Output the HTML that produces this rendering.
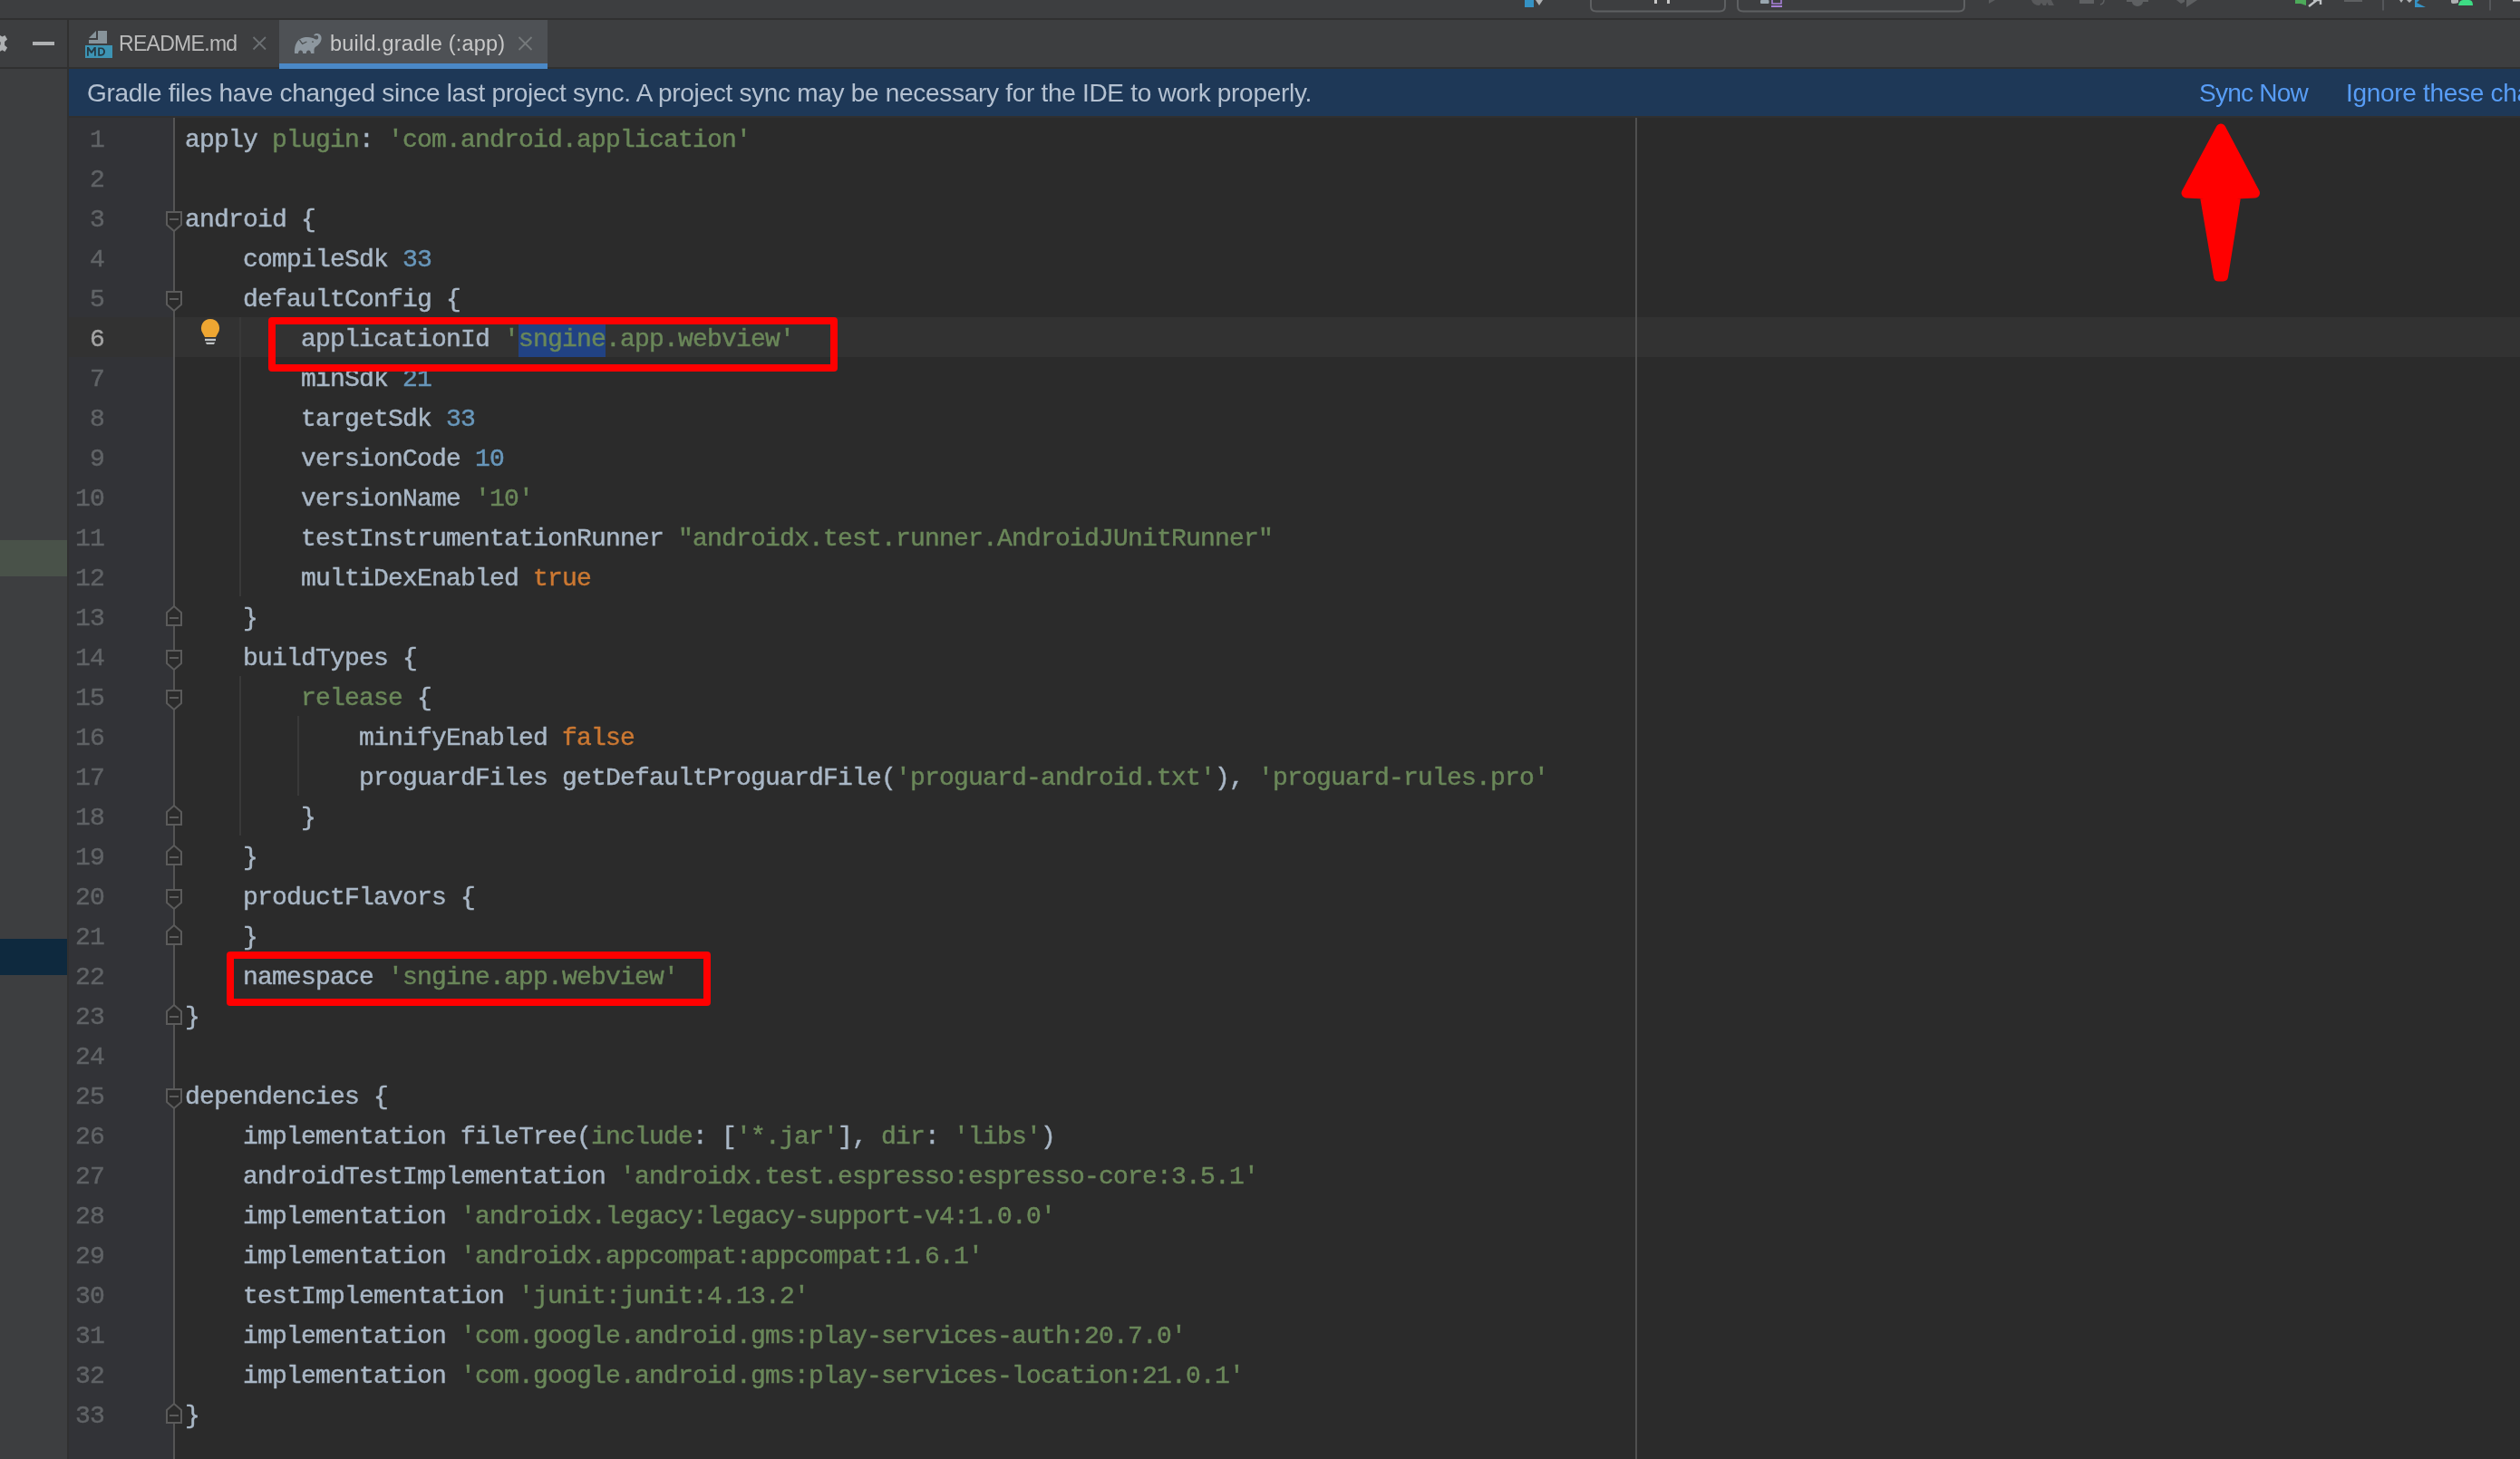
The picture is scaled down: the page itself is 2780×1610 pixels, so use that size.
<!DOCTYPE html>
<html><head><meta charset="utf-8">
<style>
*{margin:0;padding:0;box-sizing:border-box}
html,body{width:2780px;height:1610px;overflow:hidden;background:#3d3e40;position:relative}
.a{position:absolute}
.ui{font-family:"Liberation Sans",sans-serif;white-space:pre;will-change:transform}
.mono{font-family:"Liberation Mono",monospace;font-size:28px;letter-spacing:-0.803px;white-space:pre;will-change:transform;-webkit-text-stroke:0.45px currentColor}
#code,#nums{position:absolute;left:0;top:0;width:2780px;height:1610px}
#code .l{position:absolute;left:204px;height:44px;line-height:50px;color:#a9b7c6}
#nums .n{position:absolute;left:76px;width:39px;text-align:right;height:44px;line-height:50px;color:#606366}
.s{color:#6a8759}.k{color:#cc7832}.d{color:#6897bb}
.guide{position:absolute;width:2px;background:#393939}
</style></head><body>
<!-- top toolbar -->
<div class="a" style="left:0;top:0;width:2780px;height:20px;background:#3d3e40"></div>
<div class="a" style="left:0;top:20px;width:2780px;height:2px;background:#303030"></div>
<!-- tab bar -->
<div class="a" style="left:0;top:22px;width:2780px;height:52px;background:#3d3e40"></div>
<div class="a" style="left:0;top:74px;width:2780px;height:2px;background:#303030"></div>
<!-- left panel -->
<div class="a" style="left:0;top:76px;width:74px;height:1534px;background:#3d3e40"></div>
<div class="a" style="left:74px;top:22px;width:2px;height:1588px;background:#303030"></div>
<div class="a" style="left:0;top:596px;width:74px;height:40px;background:#495249"></div>
<div class="a" style="left:0;top:1036px;width:74px;height:40px;background:#0e293e"></div>
<!-- active tab -->
<div class="a" style="left:308px;top:22px;width:296px;height:54px;background:#4e5155"></div>
<div class="a" style="left:308px;top:70px;width:296px;height:6px;background:#4a88c7"></div>
<!-- banner -->
<div class="a" style="left:76px;top:76px;width:2704px;height:52px;background:#1e3857"></div>
<div class="a" style="left:76px;top:128px;width:2704px;height:2px;background:#303030"></div>

<!-- tab texts -->
<div class="a ui" style="left:131px;top:35px;font-size:23px;letter-spacing:-0.7px;color:#bbbbbb">README.md</div>
<div class="a ui" style="left:364px;top:35px;font-size:23.5px;letter-spacing:0.2px;color:#c8c8c8">build.gradle (:app)</div>
<!-- banner texts -->
<div class="a ui" style="left:96px;top:87px;font-size:28px;letter-spacing:-0.3px;color:#b4c1d1">Gradle files have changed since last project sync. A project sync may be necessary for the IDE to work properly.</div>
<div class="a ui" style="left:2426px;top:87px;font-size:28px;letter-spacing:-0.75px;color:#589df6">Sync Now</div>
<div class="a ui" style="left:2588px;top:87px;font-size:28px;letter-spacing:-0.3px;color:#589df6">Ignore these changes</div>
<!-- gutter / editor -->
<div class="a" style="left:76px;top:130px;width:115px;height:1480px;background:#323337"></div>
<div class="a" style="left:193px;top:130px;width:2587px;height:1480px;background:#2b2b2b"></div>
<div class="a" style="left:76px;top:350px;width:115px;height:44px;background:#323232"></div>
<div class="a" style="left:193px;top:350px;width:2587px;height:44px;background:#323232"></div>
<div class="a" style="left:191px;top:130px;width:2px;height:1480px;background:#555555"></div>
<div class="a" style="left:1804px;top:130px;width:2px;height:1480px;background:#4f4f4f"></div>

<svg class="a" style="left:0;top:0" width="2780" height="1610" viewBox="0 0 2780 1610">
<!-- toolbar icons (cut off at top) -->
<rect x="1682" y="0" width="10" height="8" fill="#3592c4"/>
<path d="M1694,0 H1702 L1698,6 Z" fill="#afb1b3"/>
<path d="M1755,0 V7 Q1755,12.5 1761,12.5 H1897 Q1903,12.5 1903,7 V0" fill="none" stroke="#5e6062" stroke-width="2"/>
<rect x="1825" y="0" width="3" height="4" fill="#c8c8c8"/><rect x="1839" y="0" width="3" height="4" fill="#c8c8c8"/>
<path d="M1917,0 V7 Q1917,12.5 1923,12.5 H2161 Q2167,12.5 2167,7 V0" fill="none" stroke="#5e6062" stroke-width="2"/>
<rect x="1942" y="0" width="9.5" height="4" rx="1" fill="#9aa7b0"/>
<path d="M1955,0 V4 H1965 V0" fill="none" stroke="#a67fd6" stroke-width="1.6"/><rect x="1954" y="6" width="12" height="2" fill="#a67fd6"/>
<path d="M2194,0 H2201 L2194,4 Z" fill="#5a5c5e"/>
<path d="M2241,0 Q2243,6 2250,6 L2252,3 L2254,6 H2257 L2259,0 Z M2257,0 L2260,6 H2266 L2263,0 Z" fill="#58595b"/>
<rect x="2294" y="0" width="16" height="4" fill="#5e6062"/><path d="M2317,5 Q2321,4 2321,0" stroke="#5e6062" stroke-width="1.5" fill="none"/>
<path d="M2346,0 H2370 V2 H2364 A6,5 0 0 1 2352,2 H2346 Z" fill="#5e6062"/>
<path d="M2401,0 H2410 V2 L2406,4 Z" fill="#5e6062"/><path d="M2412,0 H2424 L2412,8 Z" fill="#5e6062"/>
<path d="M2532,0 H2544 V6 L2538,4 H2532 Z" fill="#4dab5a"/>
<path d="M2547,7 L2556,0 M2552,0 H2560 V5" stroke="#c0c3c5" stroke-width="2.4" fill="none"/>
<rect x="2586" y="0" width="20" height="2" fill="#5e6062"/>
<rect x="2628" y="0" width="2" height="11.5" fill="#55575a"/>
<path d="M2647,0 H2651 L2649,3 Z M2655,0 H2661 L2658,3 Z" fill="#afb1b3"/>
<path d="M2664,0 H2669 L2666,3 L2676,8 H2664 Z" fill="#3592c4"/>
<path d="M2704,0 H2712 V3 Q2710,4 2706,4 Q2704,4 2704,2 Z" fill="#afb1b3"/>
<path d="M2712,6 Q2713,0 2717,0 H2724 Q2728,0 2728,6 Z" fill="#3ddc84"/>
<rect x="2746" y="0" width="2" height="11.5" fill="#55575a"/>
<rect x="2772" y="0" width="8" height="1.5" fill="#c8c8c8"/>
<!-- left gear partial -->
<path d="M0,39 L2.5,40.6 L5.4,39 L8.1,43.6 L5.1,45.9 L5.1,50.1 L8.1,52.4 L5.4,56.9 L2.5,55.2 L0,56.7 Z" fill="#afb1b3"/><rect x="0" y="46.2" width="0.8" height="3.3" fill="#5a5c5e"/>
<rect x="36" y="46" width="24" height="4" fill="#afb1b3"/>
<!-- MD icon -->
<path d="M98,42 L106,34 L106,42 Z" fill="#87939a"/>
<path d="M108,34 H118 V48 H98 V44 H108 Z" fill="#87939a"/>
<rect x="94" y="50" width="30" height="14" fill="#3d94b4"/>
<path d="M96,61.8 V52.1 H97.9 L100.9,56.6 L103.9,52.1 H105.8 V61.8 H104 V55.3 L101.6,58.8 H100.2 L97.8,55.3 V61.8 Z" fill="#263a44"/>
<path d="M108.2,52.4 H111.5 C114.5,52.4 116,54.5 116,57.1 C116,59.7 114.5,61.8 111.5,61.8 H108.2 Z M110,54.1 V60.1 H111.4 C113.1,60.1 114.1,59 114.1,57.1 C114.1,55.2 113.1,54.1 111.4,54.1 Z" fill="#263a44"/>
<!-- close x readme -->
<path d="M279.5,41 L293,54.5 M293,41 L279.5,54.5" stroke="#6c7073" stroke-width="1.8"/>
<!-- close x active -->
<path d="M572.5,41 L586.5,55 M586.5,41 L572.5,55" stroke="#767a7c" stroke-width="1.8"/>
<!-- elephant -->
<g transform="translate(318,30)" fill="#8d979f">
<path d="M7,28.9 C6.6,22 8.5,16 12.6,13.2 C15,11.6 18,11 21.5,11 C25,11 27.5,12 29.5,13.2 L31,13.5 C32.3,13.5 33.2,12.6 33.2,11.2 C33.2,9.9 32.3,9.1 31,9.1 C30.2,9.1 29.6,9.4 29,9.8 L28.2,8.6 C29,7.6 30.2,7 31.6,7 C34.6,7 36.6,9.2 36.6,12.2 C36.6,16.2 33.5,19.6 30.4,21.6 C29,22.6 28.5,24 28.5,25.5 V28.9 H25 C24.8,26.5 23.8,25.5 22.4,25.5 C21,25.5 20,26.5 19.8,28.9 H16.2 C16,26.5 15,25.5 13.6,25.5 C12.2,25.5 11.2,26.5 11,28.9 Z"/>
<path d="M12.4,14 L15.6,18.4 L20.4,16" stroke="#4e5254" stroke-width="1.3" fill="none"/>
<circle cx="27" cy="16.1" r="0.9" fill="#4e5254"/>
</g>
<!-- lightbulb -->
<path d="M226,372 L223.2,367 A10.1,10.1 0 1 1 240.8,367 L238,372 Z" fill="#eea632"/>
<rect x="226" y="373.8" width="12" height="2.3" fill="#c0c3c5"/>
<path d="M226.8,377.8 H237.2 L236,380 H228 Z" fill="#c0c3c5"/>
<path d="M184,234 H200 V248 L192,255 L184,248 Z" fill="#2b2b2b" stroke="#5b5b5b" stroke-width="2"/><rect x="187" y="241" width="10" height="2" fill="#5b5b5b"/>
<path d="M184,322 H200 V336 L192,343 L184,336 Z" fill="#2b2b2b" stroke="#5b5b5b" stroke-width="2"/><rect x="187" y="329" width="10" height="2" fill="#5b5b5b"/>
<path d="M184,718 H200 V732 L192,739 L184,732 Z" fill="#2b2b2b" stroke="#5b5b5b" stroke-width="2"/><rect x="187" y="725" width="10" height="2" fill="#5b5b5b"/>
<path d="M184,762 H200 V776 L192,783 L184,776 Z" fill="#2b2b2b" stroke="#5b5b5b" stroke-width="2"/><rect x="187" y="769" width="10" height="2" fill="#5b5b5b"/>
<path d="M184,982 H200 V996 L192,1003 L184,996 Z" fill="#2b2b2b" stroke="#5b5b5b" stroke-width="2"/><rect x="187" y="989" width="10" height="2" fill="#5b5b5b"/>
<path d="M184,1202 H200 V1216 L192,1223 L184,1216 Z" fill="#2b2b2b" stroke="#5b5b5b" stroke-width="2"/><rect x="187" y="1209" width="10" height="2" fill="#5b5b5b"/>
<path d="M184,690 H200 V676 L192,669 L184,676 Z" fill="#2b2b2b" stroke="#5b5b5b" stroke-width="2"/><rect x="187" y="681" width="10" height="2" fill="#5b5b5b"/>
<path d="M184,910 H200 V896 L192,889 L184,896 Z" fill="#2b2b2b" stroke="#5b5b5b" stroke-width="2"/><rect x="187" y="901" width="10" height="2" fill="#5b5b5b"/>
<path d="M184,954 H200 V940 L192,933 L184,940 Z" fill="#2b2b2b" stroke="#5b5b5b" stroke-width="2"/><rect x="187" y="945" width="10" height="2" fill="#5b5b5b"/>
<path d="M184,1042 H200 V1028 L192,1021 L184,1028 Z" fill="#2b2b2b" stroke="#5b5b5b" stroke-width="2"/><rect x="187" y="1033" width="10" height="2" fill="#5b5b5b"/>
<path d="M184,1130 H200 V1116 L192,1109 L184,1116 Z" fill="#2b2b2b" stroke="#5b5b5b" stroke-width="2"/><rect x="187" y="1121" width="10" height="2" fill="#5b5b5b"/>
<path d="M184,1570 H200 V1556 L192,1549 L184,1556 Z" fill="#2b2b2b" stroke="#5b5b5b" stroke-width="2"/><rect x="187" y="1561" width="10" height="2" fill="#5b5b5b"/>
</svg>
<div id="nums" class="mono">
<div class="n" style="top:130px">1</div>
<div class="n" style="top:174px">2</div>
<div class="n" style="top:218px">3</div>
<div class="n" style="top:262px">4</div>
<div class="n" style="top:306px">5</div>
<div class="n" style="top:350px;color:#a4a4a4">6</div>
<div class="n" style="top:394px">7</div>
<div class="n" style="top:438px">8</div>
<div class="n" style="top:482px">9</div>
<div class="n" style="top:526px">10</div>
<div class="n" style="top:570px">11</div>
<div class="n" style="top:614px">12</div>
<div class="n" style="top:658px">13</div>
<div class="n" style="top:702px">14</div>
<div class="n" style="top:746px">15</div>
<div class="n" style="top:790px">16</div>
<div class="n" style="top:834px">17</div>
<div class="n" style="top:878px">18</div>
<div class="n" style="top:922px">19</div>
<div class="n" style="top:966px">20</div>
<div class="n" style="top:1010px">21</div>
<div class="n" style="top:1054px">22</div>
<div class="n" style="top:1098px">23</div>
<div class="n" style="top:1142px">24</div>
<div class="n" style="top:1186px">25</div>
<div class="n" style="top:1230px">26</div>
<div class="n" style="top:1274px">27</div>
<div class="n" style="top:1318px">28</div>
<div class="n" style="top:1362px">29</div>
<div class="n" style="top:1406px">30</div>
<div class="n" style="top:1450px">31</div>
<div class="n" style="top:1494px">32</div>
<div class="n" style="top:1538px">33</div>
</div>
<div class="guide" style="left:264px;top:350px;height:308px"></div>
<div class="guide" style="left:264px;top:746px;height:176px"></div>
<div class="guide" style="left:328px;top:790px;height:88px"></div>
<div class="a" style="left:572px;top:350px;width:96px;height:44px;background:#214283"></div>
<div id="code" class="mono">
<div class="l" style="top:130px">apply <span class="s">plugin</span>: <span class="s">&#x27;com.android.application&#x27;</span></div>
<div class="l" style="top:174px"></div>
<div class="l" style="top:218px">android {</div>
<div class="l" style="top:262px">    compileSdk <span class="d">33</span></div>
<div class="l" style="top:306px">    defaultConfig {</div>
<div class="l" style="top:350px">        applicationId <span class="s">&#x27;sngine.app.webview&#x27;</span></div>
<div class="l" style="top:394px">        minSdk <span class="d">21</span></div>
<div class="l" style="top:438px">        targetSdk <span class="d">33</span></div>
<div class="l" style="top:482px">        versionCode <span class="d">10</span></div>
<div class="l" style="top:526px">        versionName <span class="s">&#x27;10&#x27;</span></div>
<div class="l" style="top:570px">        testInstrumentationRunner <span class="s">&quot;androidx.test.runner.AndroidJUnitRunner&quot;</span></div>
<div class="l" style="top:614px">        multiDexEnabled <span class="k">true</span></div>
<div class="l" style="top:658px">    }</div>
<div class="l" style="top:702px">    buildTypes {</div>
<div class="l" style="top:746px">        <span class="s">release</span> {</div>
<div class="l" style="top:790px">            minifyEnabled <span class="k">false</span></div>
<div class="l" style="top:834px">            proguardFiles getDefaultProguardFile(<span class="s">&#x27;proguard-android.txt&#x27;</span>), <span class="s">&#x27;proguard-rules.pro&#x27;</span></div>
<div class="l" style="top:878px">        }</div>
<div class="l" style="top:922px">    }</div>
<div class="l" style="top:966px">    productFlavors {</div>
<div class="l" style="top:1010px">    }</div>
<div class="l" style="top:1054px">    namespace <span class="s">&#x27;sngine.app.webview&#x27;</span></div>
<div class="l" style="top:1098px">}</div>
<div class="l" style="top:1142px"></div>
<div class="l" style="top:1186px">dependencies {</div>
<div class="l" style="top:1230px">    implementation fileTree(<span class="s">include</span>: [<span class="s">&#x27;*.jar&#x27;</span>], <span class="s">dir</span>: <span class="s">&#x27;libs&#x27;</span>)</div>
<div class="l" style="top:1274px">    androidTestImplementation <span class="s">&#x27;androidx.test.espresso:espresso-core:3.5.1&#x27;</span></div>
<div class="l" style="top:1318px">    implementation <span class="s">&#x27;androidx.legacy:legacy-support-v4:1.0.0&#x27;</span></div>
<div class="l" style="top:1362px">    implementation <span class="s">&#x27;androidx.appcompat:appcompat:1.6.1&#x27;</span></div>
<div class="l" style="top:1406px">    testImplementation <span class="s">&#x27;junit:junit:4.13.2&#x27;</span></div>
<div class="l" style="top:1450px">    implementation <span class="s">&#x27;com.google.android.gms:play-services-auth:20.7.0&#x27;</span></div>
<div class="l" style="top:1494px">    implementation <span class="s">&#x27;com.google.android.gms:play-services-location:21.0.1&#x27;</span></div>
<div class="l" style="top:1538px">}</div>
</div>

<!-- annotations -->
<div class="a" style="left:296px;top:350px;width:628px;height:60px;border:8px solid #ff0000;border-radius:4px"></div>
<div class="a" style="left:250px;top:1050px;width:534px;height:60px;border:8px solid #ff0000;border-radius:4px"></div>
<svg class="a" style="left:0;top:0" width="2780" height="1610" viewBox="0 0 2780 1610">
<path d="M2450,142 L2412,213 L2432,214 L2447.5,305 L2452.5,305 L2467,214 L2487.5,213 Z" fill="#ff0000" stroke="#ff0000" stroke-width="11" stroke-linejoin="round"/>
</svg>
</body></html>
